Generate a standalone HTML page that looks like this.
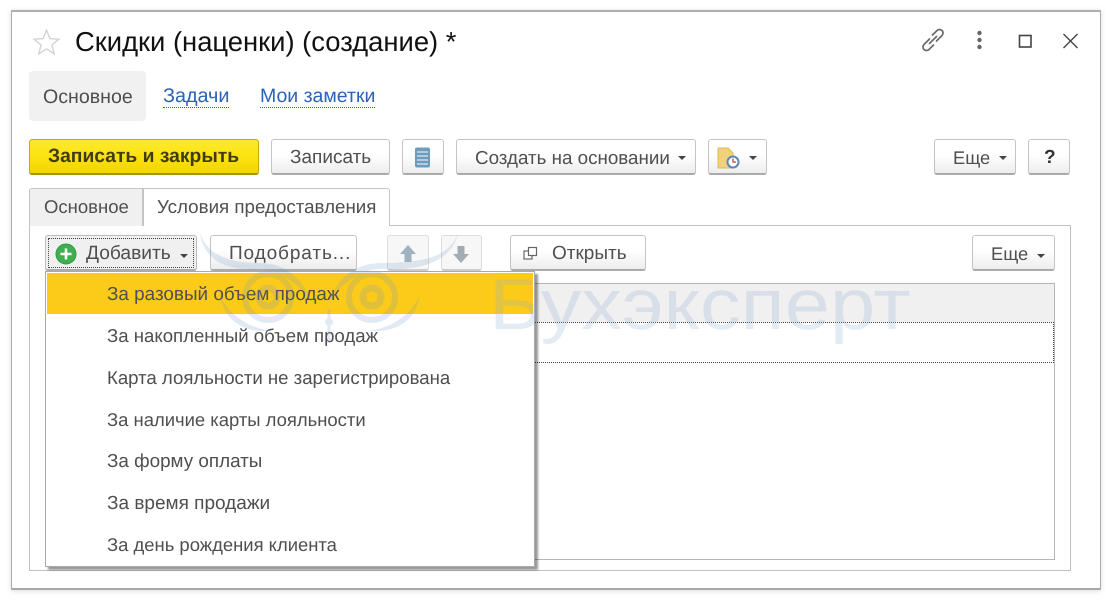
<!DOCTYPE html>
<html lang="ru"><head><meta charset="utf-8"><title>Скидки</title>
<style>
html,body{margin:0;padding:0;background:#fff}
body{width:1110px;height:600px;position:relative;overflow:hidden;font-family:"Liberation Sans",sans-serif;color:#4b4b4b;text-rendering:geometricPrecision;filter:blur(.3px)}
.a{position:absolute;box-sizing:border-box}
.t{position:absolute;white-space:nowrap;font-size:19px;line-height:24px;color:#4f4f4f}
.b{position:absolute;box-sizing:border-box;border:1px solid #c4c4c4;border-bottom:2px solid #aaa;border-radius:3px;background:linear-gradient(#fff,#fff 45%,#ececec)}
.c{position:absolute;width:0;height:0;border-left:4px solid transparent;border-right:4px solid transparent;border-top:4px solid #444}
.m{position:absolute;left:107px;white-space:nowrap;font-size:18.600px;line-height:24px;color:#4f4f4f}
.l{position:absolute;white-space:nowrap;font-size:19.600px;line-height:21px;color:#2b62b8;border-bottom:1px dotted #2b62b8}
</style></head><body>
<div class="a" style="left:11px;top:10px;width:1090px;height:580px;background:#fff;border:1px solid #ababab;border-top:2px solid #b0b0b0;border-bottom:2px solid #a8a8a8;box-shadow:0 1px 5px rgba(0,0,0,.15)"></div>

<svg class="a" style="left:32px;top:28px" width="29" height="27" viewBox="0 0 29 27"><path d="M14.500 2l3.400 8.600 9 .6-7 5.800 2.300 8.800-7.700-4.900-7.700 4.900 2.300-8.800-7-5.800 9-.6z" fill="#fff" stroke="#d0d4d8" stroke-width="1.400"/></svg>
<div class="t" style="left:75px;top:26px;font-size:27.400px;line-height:32px;color:#111">Скидки (наценки) (создание) *</div>

<svg class="a" style="left:921px;top:28px" width="24" height="24" viewBox="0 0 24 24" fill="none" stroke="#6a6a6a" stroke-width="1.700" stroke-linecap="round"><path d="M8.500 11L3 16.500a3.500 3.500 0 0 0 5 5L12.500 17"/><path d="M8.500 15.500l7-7"/><path d="M11.500 7L16 2.500a3.500 3.500 0 0 1 5 5L15.500 13"/></svg>
<svg class="a" style="left:970px;top:28px" width="20" height="24" viewBox="0 0 20 24" fill="#666"><circle cx="9.500" cy="5" r="2.200"/><circle cx="9.500" cy="12" r="2.200"/><circle cx="9.500" cy="19" r="2.200"/></svg>
<svg class="a" style="left:1016px;top:32px" width="18" height="18" viewBox="0 0 18 18" fill="none" stroke="#444" stroke-width="1.600"><rect x="3.500" y="3.500" width="11.500" height="11.500"/></svg>
<svg class="a" style="left:1060px;top:31px" width="22" height="20" viewBox="0 0 22 20" fill="none" stroke="#444" stroke-width="1.400"><path d="M3.500 3l14 14M17.500 3l-14 14"/></svg>

<div class="a" style="left:29px;top:71px;width:117px;height:50px;background:#f1f1f1;border-radius:4px"></div>
<div class="t" style="left:43px;top:85px;font-size:19.600px">Основное</div>
<div class="l" style="left:163px;top:86px;font-size:19.800px">Задачи</div>
<div class="l" style="left:260px;top:86px;font-size:19.500px">Мои заметки</div>

<div class="a" style="left:29px;top:139px;width:230px;height:36px;border:1px solid #c7a90c;border-bottom:2px solid #a8920f;border-radius:3px;background:linear-gradient(#fdea2f,#fbe20f 50%,#f2d400)"></div>
<div class="t" style="left:48px;top:145px;font-weight:bold;font-size:19.300px;color:#413c10">Записать и закрыть</div>

<div class="b" style="left:271px;top:139px;width:119px;height:36px"></div>
<div class="t" style="left:290px;top:146px">Записать</div>

<div class="b" style="left:402px;top:139px;width:42px;height:36px"></div>
<svg class="a" style="left:414px;top:147px" width="18" height="21" viewBox="0 0 18 21"><rect x="1" y="0.500" width="15" height="20" rx="2" fill="#6d9cbf"/><path d="M3 5h11M3 9h11M3 13h11M3 17h11" stroke="#dbe8f1" stroke-width="1.300"/></svg>

<div class="b" style="left:456px;top:139px;width:240px;height:36px"></div>
<div class="t" style="left:475px;top:146px;font-size:18.800px">Создать на основании</div>
<div class="c" style="left:678px;top:156px"></div>

<div class="b" style="left:708px;top:139px;width:59px;height:36px"></div>
<svg class="a" style="left:716px;top:146px" width="26" height="24" viewBox="0 0 26 24"><path d="M2 2h10l5 5v15H2z" fill="#f1d27a" stroke="#dcb95a"/><circle cx="17" cy="16" r="5.500" fill="#fff" stroke="#5f86bb" stroke-width="2"/><path d="M17 12.500V16h3" stroke="#d0604d" stroke-width="1.500" fill="none"/></svg>
<div class="c" style="left:749px;top:156px"></div>

<div class="b" style="left:934px;top:139px;width:82px;height:36px"></div>
<div class="t" style="left:953px;top:146px;font-size:18.300px">Еще</div>
<div class="c" style="left:999px;top:156px"></div>
<div class="b" style="left:1028px;top:139px;width:42px;height:36px"></div>
<div class="t" style="left:1044px;top:146px;font-weight:bold;color:#333">?</div>

<div class="a" style="left:29px;top:225px;width:1042px;height:346px;border:1px solid #c0c0c0;background:#fff"></div>
<div class="a" style="left:29px;top:188px;width:114px;height:38px;border:1px solid #c4c4c4;border-bottom:none;border-radius:3px 0 0 0;background:#f0f0f0"></div>
<div class="t" style="left:44px;top:195px;font-size:18.500px">Основное</div>
<div class="a" style="left:143px;top:188px;width:247px;height:38px;border:1px solid #c4c4c4;border-bottom:none;border-radius:0 3px 0 0;background:#fff"></div>
<div class="t" style="left:157px;top:195px;font-size:18.750px">Условия предоставления</div>

<div class="a" style="left:45px;top:235px;width:152px;height:36px;border:1px solid #bbb;border-bottom:2px solid #aaa;border-radius:3px;background:#f0f0f0"></div>
<div class="a" style="left:48px;top:238px;width:146px;height:30px;border:1px dotted #444"></div>
<svg class="a" style="left:55px;top:243px" width="22" height="22" viewBox="0 0 22 22"><circle cx="11" cy="11" r="10" fill="#43ad52" stroke="#2f9c45"/><path d="M11 5.500v11M5.500 11h11" stroke="#fff" stroke-width="2.600"/></svg>
<div class="t" style="left:86px;top:242px;font-size:19.200px">Добавить</div>
<div class="c" style="left:180px;top:254px"></div>

<div class="b" style="left:210px;top:235px;width:147px;height:36px"></div>
<div class="t" style="left:229px;top:242px;letter-spacing:.9px">Подобрать...</div>
<div class="a" style="left:387px;top:235px;width:42px;height:36px;border:1px solid #ddd;border-bottom:2px solid #ccc;border-radius:3px;background:#f7f7f7"></div>
<svg class="a" style="left:398px;top:244px" width="20" height="20" viewBox="0 0 20 20"><path d="M10 1l8 9h-4.500v8h-7v-8H2z" fill="#9fb2bf"/></svg>
<div class="a" style="left:441px;top:235px;width:41px;height:36px;border:1px solid #ddd;border-bottom:2px solid #ccc;border-radius:3px;background:#f7f7f7"></div>
<svg class="a" style="left:451px;top:244px" width="20" height="20" viewBox="0 0 20 20"><path d="M10 19l8-9h-4.500V2h-7v8H2z" fill="#a3acb3"/></svg>
<div class="b" style="left:510px;top:235px;width:136px;height:36px"></div>
<svg class="a" style="left:523px;top:246px" width="16" height="15" viewBox="0 0 16 15" fill="#fff" stroke="#666" stroke-width="1.200"><rect x="1" y="5" width="8" height="8"/><rect x="5.500" y="1.500" width="8" height="8"/></svg>
<div class="t" style="left:552px;top:242px">Открыть</div>
<div class="b" style="left:972px;top:235px;width:83px;height:36px"></div>
<div class="t" style="left:991px;top:242px;font-size:18.300px">Еще</div>
<div class="c" style="left:1037px;top:254px"></div>

<div class="a" style="left:45px;top:283px;width:1010px;height:277px;border:1px solid #b5b5b5;background:#fff"></div>
<div class="a" style="left:46px;top:284px;width:1008px;height:38px;background:#f0f0f0"></div>
<div class="a" style="left:46px;top:322px;width:1008px;height:41px;border:1px dotted #444;background:#fff"></div>

<div class="a" style="left:45px;top:271px;width:490px;height:296px;background:#fff;border:1px solid #aaa;box-shadow:3px 3px 2px rgba(0,0,0,.4)"></div>
<div class="a" style="left:47px;top:273px;width:486px;height:41px;background:#fccb1a"></div>
<div class="m" style="top:283px;font-size:18.900px">За разовый объем продаж</div>
<div class="m" style="top:324px">За накопленный объем продаж</div>
<div class="m" style="top:366px;font-size:18.600px">Карта лояльности не зарегистрирована</div>
<div class="m" style="top:408px;font-size:18.450px">За наличие карты лояльности</div>
<div class="m" style="top:449px;font-size:18.850px">За форму оплаты</div>
<div class="m" style="top:492px;font-size:19px">За время продажи</div>
<div class="m" style="top:533px;font-size:18.450px">За день рождения клиента</div>

<svg class="a" style="left:190px;top:225px" width="270" height="125" viewBox="0 0 270 125" fill="none" stroke="#6f96c4" opacity=".2">
<circle cx="78" cy="72" r="23" stroke-width="6"/><circle cx="78" cy="72" r="9" stroke-width="7"/>
<circle cx="182" cy="72" r="23" stroke-width="6"/><circle cx="182" cy="72" r="9" stroke-width="7"/>
<path d="M10 8C18 30 38 38 70 38 92 38 112 50 122 78 108 58 90 44 68 44 38 46 14 36 10 8z" fill="#6f96c4" stroke="none"/>
<path d="M268 8C260 30 238 38 192 38 168 38 148 50 138 78 152 58 170 44 192 44 232 46 262 36 268 8z" fill="#6f96c4" stroke="none"/>
<path d="M30 70C34 96 54 108 82 106 66 104 42 96 30 70zM230 70C226 96 206 108 178 106 194 104 218 96 230 70z" fill="#6f96c4" stroke="none"/>
<circle cx="139" cy="97" r="4" fill="#6f96c4" stroke="none"/><path d="M139 84v34" stroke-width="3"/>
</svg>
<div class="t" style="left:489px;top:263px;font-size:72px;line-height:84px;color:#8fadd0;opacity:.24;transform:scaleX(1.130);transform-origin:0 0">Бухэксперт</div>
</body></html>
